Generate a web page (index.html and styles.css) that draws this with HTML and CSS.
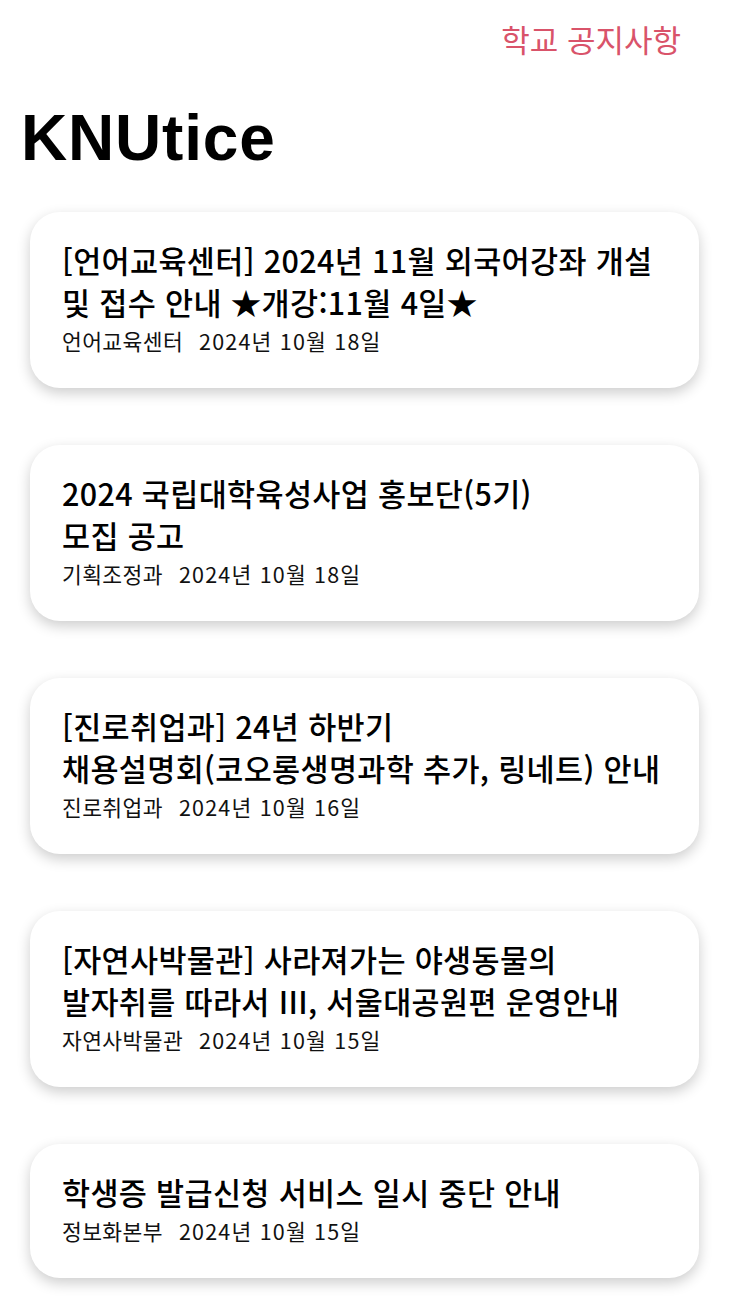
FILE: index.html
```html
<!DOCTYPE html>
<html lang="ko">
<head>
<meta charset="utf-8">
<title>KNUtice</title>
<link rel="stylesheet" href="styles.css">
</head>
<body>
<div class="screen">
  <header class="topbar">
    <span class="topbar-title">학교 공지사항</span>
  </header>
  <h1 class="large-title">KNUtice</h1>
  <ul class="notice-list">
    <li class="notice-card">
      <div class="notice-title">[언어교육센터] 2024년 11월 외국어강좌 개설<br>및 접수 안내 ★개강:11월 4일★</div>
      <div class="notice-meta"><span class="dept">언어교육센터</span><span class="date">2024년 10월 18일</span></div>
    </li>
    <li class="notice-card">
      <div class="notice-title">2024 국립대학육성사업 홍보단(5기)<br>모집 공고</div>
      <div class="notice-meta"><span class="dept">기획조정과</span><span class="date">2024년 10월 18일</span></div>
    </li>
    <li class="notice-card">
      <div class="notice-title">[진로취업과] 24년 하반기<br>채용설명회(코오롱생명과학 추가, 링네트) 안내</div>
      <div class="notice-meta"><span class="dept">진로취업과</span><span class="date">2024년 10월 16일</span></div>
    </li>
    <li class="notice-card">
      <div class="notice-title">[자연사박물관] 사라져가는 야생동물의<br>발자취를 따라서 III, 서울대공원편 운영안내</div>
      <div class="notice-meta"><span class="dept">자연사박물관</span><span class="date">2024년 10월 15일</span></div>
    </li>
    <li class="notice-card">
      <div class="notice-title">학생증 발급신청 서비스 일시 중단 안내</div>
      <div class="notice-meta"><span class="dept">정보화본부</span><span class="date">2024년 10월 15일</span></div>
    </li>
  </ul>
</div>
</body>
</html>
```
FILE: styles.css
```css
* { box-sizing: border-box; }
html, body {
  margin: 0;
  padding: 0;
  background: #ffffff;
}
body {
  font-family: "Liberation Sans", "Noto Sans CJK KR", sans-serif;
  color: #000;
}
.screen {
  width: 732px;
  height: 1306px;
  overflow: hidden;
}
.topbar {
  height: 80px;
  display: flex;
  justify-content: flex-end;
  align-items: center;
  padding-right: 51px;
  padding-bottom: 4px;
}
.topbar-title {
  font-family: "Noto Sans CJK KR", sans-serif;
  font-size: 31px;
  color: #d9536a;
  line-height: 1;
}
.large-title {
  margin: 20px 0 0 21px;
  font-family: "Liberation Sans", sans-serif;
  font-weight: 700;
  font-size: 64px;
  line-height: 76px;
  letter-spacing: 0.8px;
}
.notice-list {
  list-style: none;
  margin: 36px 0 0 30px;
  padding: 0;
  width: 669px;
  display: flex;
  flex-direction: column;
  gap: 57px;
}
.notice-card {
  background: #fff;
  border-radius: 30px;
  padding: 27px 20px 29px 32px;
  box-shadow: 0 5px 14px rgba(0, 0, 0, 0.2);
}
.notice-title {
  font-family: "Noto Sans CJK KR", sans-serif;
  font-weight: 500;
  font-size: 30.5px;
  line-height: 42px;
  letter-spacing: 0.35px;
  white-space: nowrap;
}
.notice-meta {
  font-family: "Noto Sans CJK KR", sans-serif;
  font-size: 21.5px;
  line-height: 38px;
  margin-top: -1px;
  margin-bottom: -1px;
  letter-spacing: 0.4px;
  display: flex;
  gap: 16px;
  color: #111;
}
.date {
  letter-spacing: 1.2px;
}
```
